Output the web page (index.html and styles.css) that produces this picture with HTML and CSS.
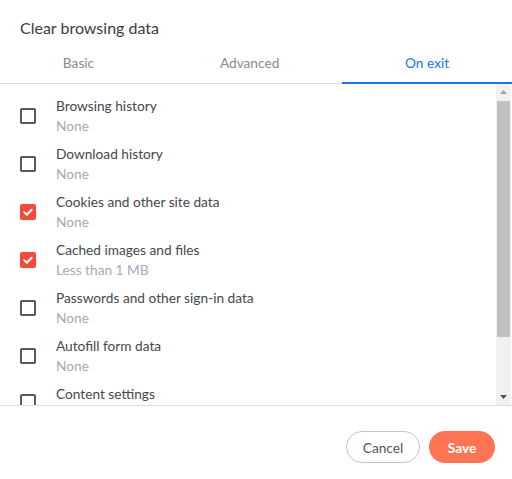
FILE: index.html
```html
<!DOCTYPE html>
<html>
<head>
<meta charset="utf-8">
<link rel="stylesheet" href="styles.css">
</head>
<body>
<div class="dialog">
  <div class="title">Clear browsing data</div>
  <div class="tabs">
    <div class="tab">Basic</div>
    <div class="tab">Advanced</div>
    <div class="tab active">On exit</div>
  </div>
  <div class="list">
    <div class="viewport">
      <div class="row"><span class="box"></span><div class="txt"><div class="label">Browsing history</div><div class="sub">None</div></div></div>
      <div class="row"><span class="box"></span><div class="txt"><div class="label">Download history</div><div class="sub">None</div></div></div>
      <div class="row"><span class="box checked"><svg viewBox="0 0 16 16" width="16" height="16"><path d="M4.3 8.2 L6.9 10.7 L11.8 5.6" fill="none" stroke="#fff" stroke-width="2" stroke-linecap="round" stroke-linejoin="round"/></svg></span><div class="txt"><div class="label">Cookies and other site data</div><div class="sub">None</div></div></div>
      <div class="row"><span class="box checked"><svg viewBox="0 0 16 16" width="16" height="16"><path d="M4.3 8.2 L6.9 10.7 L11.8 5.6" fill="none" stroke="#fff" stroke-width="2" stroke-linecap="round" stroke-linejoin="round"/></svg></span><div class="txt"><div class="label">Cached images and files</div><div class="sub">Less than 1 MB</div></div></div>
      <div class="row"><span class="box"></span><div class="txt"><div class="label">Passwords and other sign-in data</div><div class="sub">None</div></div></div>
      <div class="row"><span class="box"></span><div class="txt"><div class="label">Autofill form data</div><div class="sub">None</div></div></div>
      <div class="row last"><span class="box"></span><div class="txt"><div class="label">Content settings</div></div></div>
    </div>
    <div class="scrollbar">
      <div class="arrow"><svg width="7" height="4" viewBox="0 0 7 4"><path d="M0 4 L3.5 0 L7 4 Z" fill="#a3a3a3"/></svg></div>
      <div class="track"><div class="thumb"></div></div>
      <div class="arrow"><svg width="7" height="4" viewBox="0 0 7 4"><path d="M0 0 L7 0 L3.5 4 Z" fill="#505050"/></svg></div>
    </div>
  </div>
  <div class="footer">
    <button class="btn cancel">Cancel</button>
    <button class="btn save">Save</button>
  </div>
</div>
</body>
</html>
```
FILE: styles.css
```css
html, body {
  margin: 0;
  padding: 0;
  background: #fff;
  font-family: "Lato", "Noto Sans", sans-serif;
}
.dialog {
  width: 512px;
  height: 479px;
  display: flex;
  flex-direction: column;
}
.title {
  font-size: 16px;
  color: #3b3b45;
  padding: 18px 0 0 20px;
  height: 27px;
  line-height: 20px;
}
.tabs {
  display: flex;
  height: 38px;
  border-bottom: 1px solid #dcdcdc;
}
.tab {
  flex: 1 1 auto;
  text-align: center;
  font-size: 13.7px;
  color: #8a8a8f;
  line-height: 36px;
  border-bottom: 2px solid transparent;
  margin-bottom: -1px;
}
.tab.active {
  color: #1a73e8;
  border-bottom-color: #1a73e8;
}
.list {
  height: 322px;
  display: flex;
  border-bottom: 1px solid #dcdcdc;
  box-sizing: border-box;
}
.viewport {
  flex: 1;
  overflow: hidden;
  padding-top: 8px;
}
.scrollbar {
  width: 15px;
  margin-right: 1px;
  background: #f1f1f1;
  display: flex;
  flex-direction: column;
}
.arrow {
  height: 16px;
  display: flex;
  align-items: center;
  justify-content: center;
}
.track {
  flex: 1;
  padding: 1px 1px;
}
.thumb {
  height: 236px;
  background: #c1c1c1;
}
.row {
  display: flex;
  align-items: center;
  height: 48px;
  padding-left: 20px;
}
.row.last {
  align-items: flex-start;
  height: 24px;
  padding-top: 4px;
}
.row.last .box {
  margin-top: 10px;
}
.box {
  width: 16px;
  height: 16px;
  box-sizing: border-box;
  border: 2px solid #5a5a60;
  border-radius: 2px;
  flex: none;
  display: flex;
}
.box.checked {
  background: #f44a3c;
  border-color: #f44a3c;
}
.box svg {
  margin: -2px;
}
.txt {
  margin-left: 20px;
  display: flex;
  flex-direction: column;
}
.label {
  font-size: 13.7px;
  color: #47474f;
  line-height: 20px;
}
.sub {
  font-size: 13.7px;
  color: #a9a9b8;
  line-height: 20px;
}
.footer {
  display: flex;
  justify-content: flex-end;
  gap: 9px;
  padding: 25px 17px 0 0;
}
.btn {
  height: 32px;
  border-radius: 16px;
  font-family: inherit;
  font-size: 13.7px;
  padding: 0;
  cursor: pointer;
}
.cancel {
  width: 74px;
  background: #fff;
  border: 1px solid #c3c3cc;
  color: #55555d;
}
.save {
  width: 66px;
  background: #ff7452;
  border: none;
  color: #fff;
  font-weight: 700;
}
```
